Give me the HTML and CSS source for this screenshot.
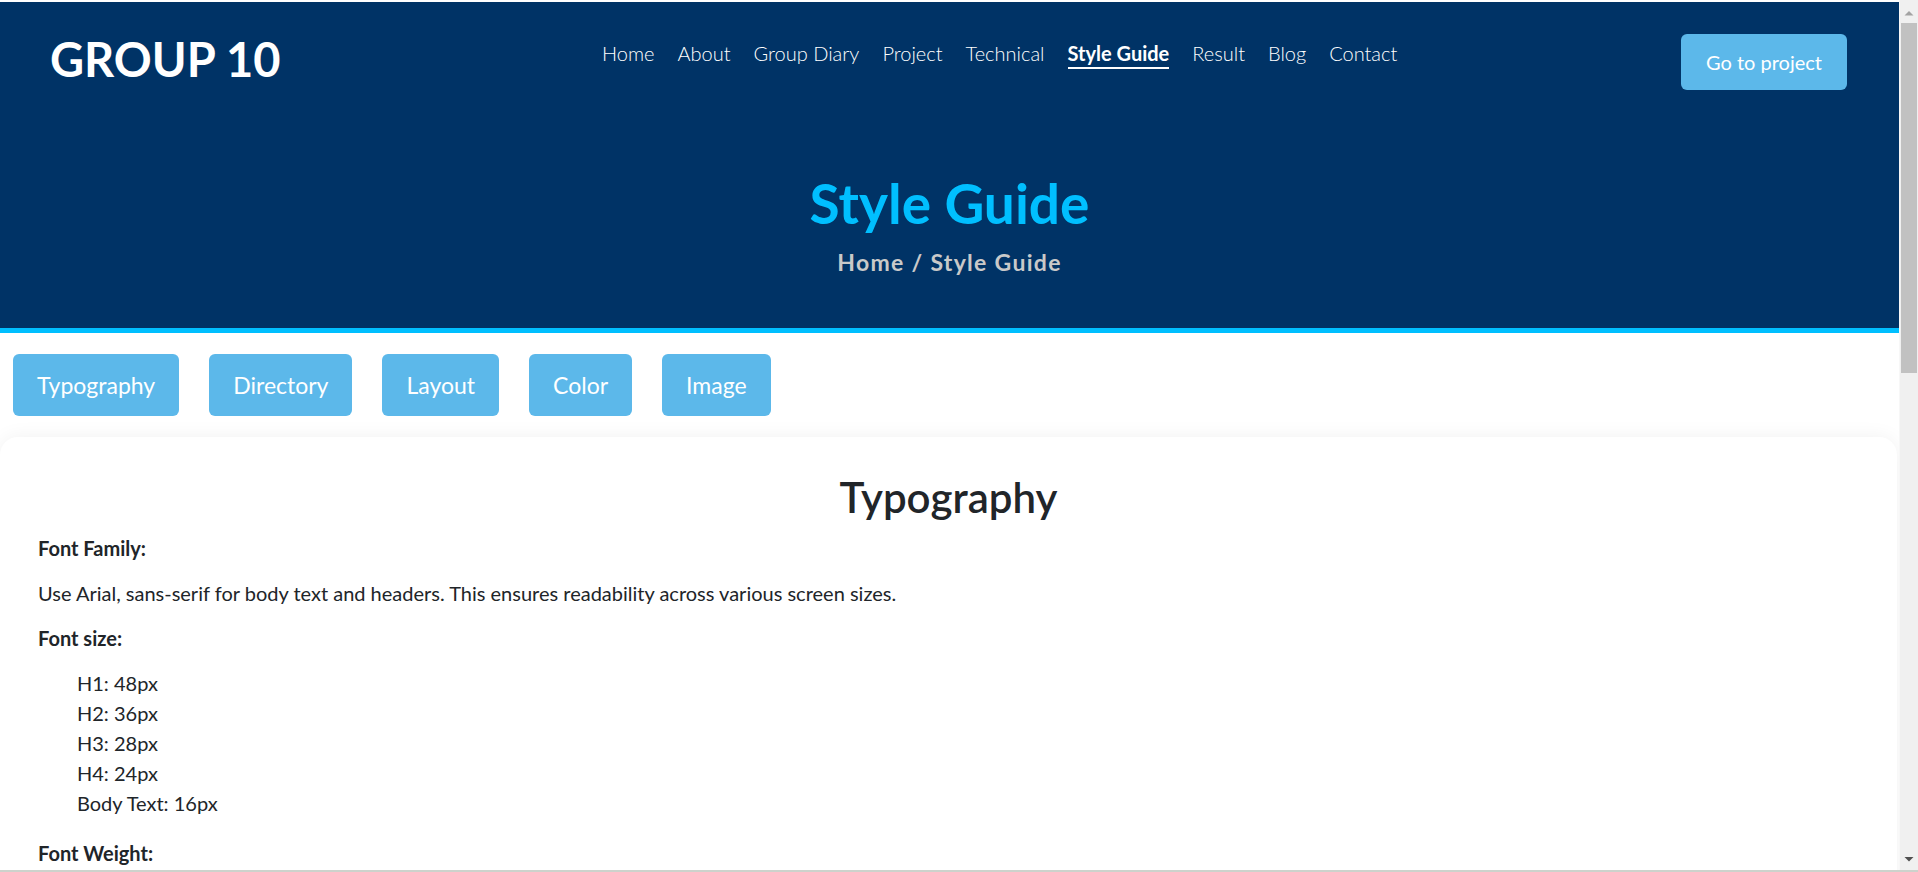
FILE: index.html
```html
<!DOCTYPE html>
<html lang="en">
<head>
<meta charset="utf-8">
<title>Style Guide - Group 10</title>
<link rel="stylesheet" href="styles.css">
</head>
<body>
<header class="site-header">
  <div class="topbar">
    <a class="brand" href="#">GROUP 10</a>
    <nav class="main-nav">
      <a href="#">Home</a>
      <a href="#">About</a>
      <a href="#">Group Diary</a>
      <a href="#">Project</a>
      <a href="#">Technical</a>
      <a class="active" href="#">Style Guide</a>
      <a href="#">Result</a>
      <a href="#">Blog</a>
      <a href="#">Contact</a>
    </nav>
    <a class="btn-project" href="#">Go to project</a>
  </div>
  <div class="hero">
    <h1 class="hero-title">Style Guide</h1>
    <p class="crumbs">Home / Style Guide</p>
  </div>
</header>

<div class="tabs">
  <button class="tab">Typography</button>
  <button class="tab">Directory</button>
  <button class="tab">Layout</button>
  <button class="tab">Color</button>
  <button class="tab">Image</button>
</div>

<main class="card">
  <section class="guide-section">
    <h2 class="section-title">Typography</h2>
    <p class="label">Font Family:</p>
    <p>Use Arial, sans-serif for body text and headers. This ensures readability across various screen sizes.</p>
    <p class="label">Font size:</p>
    <ul class="plain-list">
      <li>H1: 48px</li>
      <li>H2: 36px</li>
      <li>H3: 28px</li>
      <li>H4: 24px</li>
      <li>Body Text: 16px</li>
    </ul>
    <p class="label">Font Weight:</p>
    <ul class="plain-list">
      <li>Headers: Bold</li>
      <li>Navigation: Regular</li>
      <li>Body Text: Regular</li>
    </ul>
    <p class="label">Line Height:</p>
    <p>Use a line height of 1.5 for body text to keep paragraphs easy to read.</p>
  </section>

  <section class="guide-section">
    <h2 class="section-title">Directory</h2>
    <p>All pages share the same header, navigation bar and footer. The site is organised as follows:</p>
    <ul class="plain-list">
      <li>index.html – Home</li>
      <li>about.html – About</li>
      <li>diary.html – Group Diary</li>
      <li>project.html – Project</li>
      <li>styleguide.html – Style Guide</li>
    </ul>
  </section>

  <section class="guide-section">
    <h2 class="section-title">Layout</h2>
    <p>Every page starts with the navigation bar, followed by a banner with the page title and breadcrumb.</p>
    <p>Content is placed in white cards with rounded corners and a soft shadow.</p>
    <p>Use flexible grids so that the layout adapts to desktop, tablet and mobile screens.</p>
  </section>

  <section class="guide-section">
    <h2 class="section-title">Color</h2>
    <p>The colour palette is based on blue tones:</p>
    <ul class="plain-list">
      <li>Primary: #003366 (header background)</li>
      <li>Accent: #00BFFF (titles and highlights)</li>
      <li>Buttons: #5DB8EA</li>
      <li>Text: #212529</li>
    </ul>
  </section>

  <section class="guide-section">
    <h2 class="section-title">Image</h2>
    <p>Images should be clear, relevant and compressed for the web.</p>
    <p>Always provide alternative text for accessibility.</p>
    <p>Keep a consistent aspect ratio for images displayed in the same section.</p>
  </section>
</main>

<div class="fake-scrollbar" aria-hidden="true">
  <svg width="19" height="870" viewBox="0 0 19 870">
    <rect x="0" y="0" width="19" height="870" fill="#f0f0f0"/>
    <rect x="0" y="0" width="1" height="870" fill="#f7f7f7"/>
    <polygon points="5.5,15.5 10,11 14.5,15.5" fill="#a3a3a3"/>
    <rect x="2" y="23" width="16" height="350" fill="#c1c1c1"/>
    <polygon points="5.5,857 14.5,857 10,861.5" fill="#505050"/>
  </svg>
</div>
<div class="window-edge" aria-hidden="true"></div>
</body>
</html>
```

FILE: styles.css
```css
* {
  box-sizing: border-box;
}

html,
body {
  margin: 0;
}

body {
  padding-top: 2px;
  padding-right: 19px;
  font-family: Lato, "Open Sans", "Liberation Sans", sans-serif;
  color: #212529;
  background: #ffffff;
}

/* ---------- Header ---------- */
.site-header {
  background: #003366;
  border-bottom: 5px solid #00bfff;
  height: 331px;
}

.topbar {
  display: flex;
  align-items: flex-start;
  height: 100px;
  padding: 0 52px 0 50px;
}

.brand {
  flex-shrink: 0;
  width: 552px;
  margin-top: 27px;
  font-size: 47px;
  line-height: 60px;
  font-weight: 700;
  color: #ffffff;
  text-decoration: none;
}

.main-nav {
  display: flex;
  gap: 23px;
  margin-top: 37px;
}

.main-nav a {
  color: #ffffff;
  text-decoration: none;
  font-size: 20px;
  line-height: 28px;
  font-weight: 300;
}

.main-nav a.active {
  font-weight: 700;
  border-bottom: 2px solid #ffffff;
}

.btn-project {
  margin-left: auto;
  margin-top: 32px;
  padding: 16px 25px;
  background: #5cb8ea;
  color: #ffffff;
  font-size: 20px;
  line-height: 24px;
  border-radius: 6px;
  text-decoration: none;
}

.hero {
  text-align: center;
  padding-top: 65px;
}

.hero-title {
  margin: 0;
  font-size: 55px;
  line-height: 72px;
  font-weight: 700;
  color: #00bfff;
}

.crumbs {
  margin: 8px 0 0;
  font-size: 23px;
  line-height: 30px;
  font-weight: 700;
  letter-spacing: 1.3px;
  color: #c9c9c9;
}

/* ---------- Tabs ---------- */
.tabs {
  display: flex;
  gap: 30px;
  padding: 21px 13px 0;
}

.tab {
  font-family: inherit;
  font-size: 23px;
  line-height: 30px;
  padding: 16px 24px;
  background: #5cb8ea;
  color: #ffffff;
  border: 0;
  border-radius: 6px;
  cursor: pointer;
}

/* ---------- Card ---------- */
.card {
  margin: 21px 2px 20px 0;
  padding: 35px 38px 40px;
  background: #ffffff;
  border-radius: 18px;
  box-shadow: 0 0 20px rgba(0, 0, 0, 0.06);
}

.section-title {
  margin: 0 0 11px;
  text-align: center;
  font-size: 42px;
  line-height: 50px;
  font-weight: 600;
  color: #212529;
}

.guide-section + .guide-section {
  margin-top: 40px;
}

.card p {
  margin: 0 0 15px;
  font-size: 20px;
  line-height: 30px;
}

.card p.label {
  font-weight: 700;
}

.plain-list {
  list-style: none;
  margin: 0 0 20px;
  padding-left: 39px;
  font-size: 20px;
  line-height: 30px;
}

/* ---------- Window chrome (drawn over the page) ---------- */
.fake-scrollbar {
  position: fixed;
  top: 0;
  right: 0;
  width: 19px;
  height: 870px;
  line-height: 0;
}

.window-edge {
  position: fixed;
  left: 0;
  right: 0;
  bottom: 0;
  height: 2px;
  background: #cdd2cc;
}
```
